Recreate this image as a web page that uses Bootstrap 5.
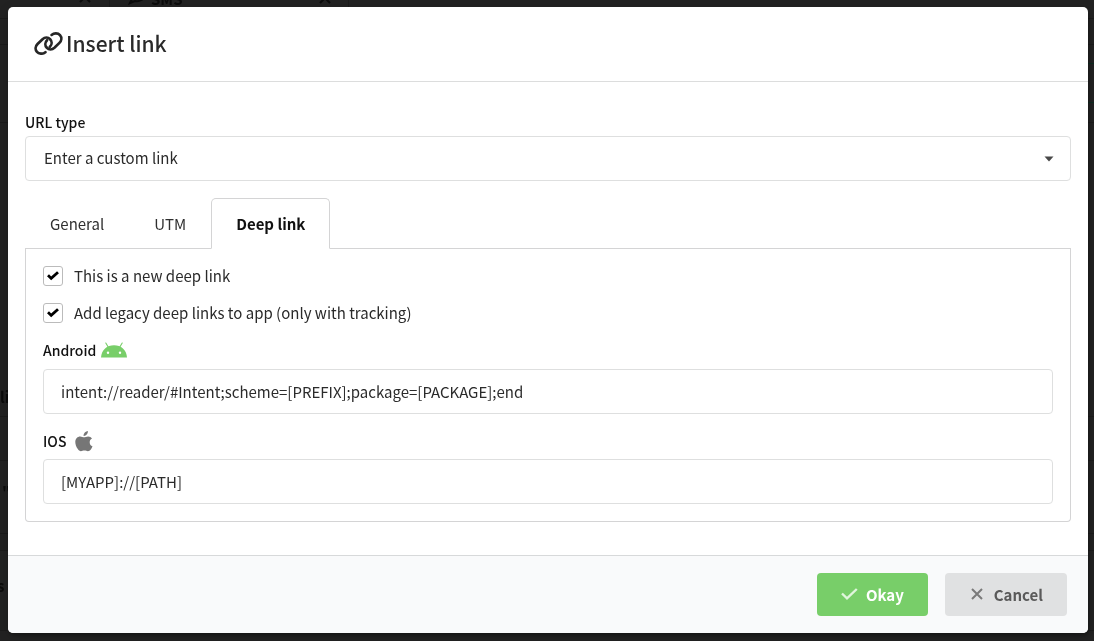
<!DOCTYPE html>
<html lang="en">
<head>
<meta charset="utf-8">
<meta name="viewport" content="width=device-width, initial-scale=1">
<title>Insert link</title>
<link href="https://cdn.jsdelivr.net/npm/bootstrap@5.3.0/dist/css/bootstrap.min.css" rel="stylesheet">
<style>
  body { background: #222; color: #2a2a2a; font: 400 15px/24px "Noto Sans CJK SC", "Open Sans", sans-serif; overflow: hidden; }
  .page-behind { color: #0b0b0b; font-weight: 700; }
  .page-behind > * { position: absolute; line-height: 24px; }
  .rule { height: 1px; background: #1b1b1b; left: 0; right: 0; }
  .rule-green { height: 1px; background: #0d2b20; left: 50%; right: 0; }
  .rule-upright { width: 1px; height: 18px; top: 0; background: #1b1b1b; }
  .shell { padding: 7px 6px 8px 8px; }
  .modal-content { background: #fff; color: #2a2a2a; border: 0; border-radius: 5px; box-shadow: 1px 3px 3px rgba(0,0,0,.2), 1px 3px 12px rgba(0,0,0,.2); }
  .modal-header { padding: 19px 25px 22px; height: 75px; border-bottom: 1px solid #dcdddd; justify-content: flex-start; gap: 3px; }
  .modal-title { font-size: 21px; font-weight: 500; line-height: 32px; }
  .modal-body { padding: 28px 17px 33px; }
  .modal-footer { padding: 17px 21px 17px 17px; gap: 17px; border-top: 1px solid #d7d9da; background: #f9fafb; border-radius: 0 0 5px 5px; }
  .modal-footer > * { margin: 0; }
  .form-label { font-size: 14px; font-weight: 500; line-height: 24px; margin-bottom: 2px; color: #111; }
  .tab-pane .form-label { margin-bottom: 7px; }
  .tab-pane .form-control + .form-label { margin-top: 15px; margin-bottom: 6px; }
  .form-control, .form-select { height: 45px; padding: 8px 17px 10px; font-size: 15px; line-height: 24px; color: #2b2b2b; border-color: #dedfdf; border-radius: 4px; }
  .form-control { padding-bottom: 9px; }
  .form-select { padding-left: 18px; background-image: url("data:image/svg+xml,%3csvg xmlns='http://www.w3.org/2000/svg' viewBox='0 0 10 6'%3e%3cpath fill='%23484848' d='M.5.5h9L5 5.5z'/%3e%3c/svg%3e"); background-size: 10px 6px; background-position: right 16px center; }
  .nav-tabs { margin-top: 17px; border-bottom: 1px solid #d4d4d5; }
  .nav-tabs .nav-link { padding: 13px 24px 12px; color: #2f2f2f; line-height: 24px; border-radius: 5px 5px 0 0; }
  .nav-tabs .nav-link.active { background: #fff; color: #111; font-weight: 700; border-color: #d4d4d5 #d4d4d5 #fff; }
  .tab-content { border: 1px solid #d4d4d5; border-top: 0; border-radius: 0 0 4px 4px; padding: 15px 17px 17px; }
  .form-check { min-height: 24px; padding-left: 31px; margin-bottom: 13px; }
  .form-check .form-check-input { width: 20px; height: 20px; margin: 2px 0 0 -31px; border-color: #bbb; border-radius: 3px; }
  .form-check-input:checked { background-color: #fff; background-size: 14px 14px; background-image: url("data:image/svg+xml,%3csvg xmlns='http://www.w3.org/2000/svg' viewBox='0 0 14 14'%3e%3cpath fill='none' stroke='%23000' stroke-width='2.8' d='M2 6.2l3.2 3.2L12 3.2'/%3e%3c/svg%3e"); }
  .btn { height: 43px; padding: 8px 24px 9px; font-size: 15px; font-weight: 700; line-height: 25px; border: 0; border-radius: 4px; }
  .btn-okay, .btn-okay:hover { background: #78ce69; color: #fff; }
  .btn-cancel, .btn-cancel:hover { background: #e0e1e2; color: #5a5a5a; }
</style>
</head>
<body>
<div class="page-behind position-fixed top-0 start-0 w-100 h-100 overflow-hidden" aria-hidden="true">
  <i class="rule" style="top:18px"></i><i class="rule" style="top:44px"></i>
  <i class="rule-green" style="top:63px"></i><i class="rule-green" style="top:102px"></i>
  <i class="rule" style="top:122px"></i><i class="rule" style="top:416px"></i>
  <i class="rule" style="top:460px"></i><i class="rule" style="top:533px"></i>
  <i class="rule" style="top:550px"></i><i class="rule" style="top:630px"></i>
  <i class="rule-upright" style="left:109px"></i><i class="rule-upright" style="left:348px"></i>
  <svg style="left:79px;top:-7px" width="12" height="10" viewBox="0 0 12 10"><path d="M1 9l5-5 5 5" fill="none" stroke="#0b0b0b" stroke-width="2"/></svg>
  <svg style="left:128px;top:-11px" width="17" height="16" viewBox="0 0 17 16"><path d="M2 14l2-4C0 5 4 1 9 1s7 3 7 6-4 6-9 5l-5 2z" fill="none" stroke="#0b0b0b" stroke-width="2"/></svg>
  <span style="left:151px;top:-13px">SMS</span>
  <svg style="left:319px;top:-6px" width="12" height="10" viewBox="0 0 12 10"><path d="M1 9l5-5 5 5" fill="none" stroke="#0b0b0b" stroke-width="2"/></svg>
  <span style="left:0;top:385px">li</span>
  <span style="left:2px;top:480px">"</span>
  <span style="left:-3px;top:574px">s</span>
</div>

<main class="shell position-relative">
  <form class="modal-content" onsubmit="return false">
    <header class="modal-header">
      <svg width="30" height="24" viewBox="-1 -1 31 25" fill="none" stroke="#262626" stroke-width="2.8" stroke-linecap="round" aria-hidden="true">
        <path d="M11.800 21.100C9.200 23.200 5.200 23.200 3 20.700 .8 18.200 1.400 14.800 3.600 12.600L8.800 7.600C11.200 5.400 14.600 5.400 16.700 7.600 18.900 9.900 18.700 13.200 16.500 15.400"/>
        <path d="M18.200 3.100C20.800 .8 24.800 .8 27 3.300 29.200 5.800 28.600 9.200 26.400 11.400L21.200 16.400C18.800 18.600 15.400 18.600 13.300 16.400 11.100 14.100 11.300 10.800 13.500 8.600"/>
      </svg>
      <h1 class="modal-title">Insert link</h1>
    </header>

    <div class="modal-body">
      <label class="form-label d-block" for="urlType">URL type</label>
      <select class="form-select" id="urlType"><option>Enter a custom link</option></select>

      <ul class="nav nav-tabs" role="tablist">
        <li class="nav-item"><button type="button" class="nav-link" role="tab">General</button></li>
        <li class="nav-item"><button type="button" class="nav-link" role="tab">UTM</button></li>
        <li class="nav-item"><button type="button" class="nav-link active" role="tab" aria-selected="true">Deep link</button></li>
      </ul>
      <div class="tab-content">
        <div class="tab-pane active" role="tabpanel">
          <div class="form-check">
            <input class="form-check-input" type="checkbox" id="newDeep" checked>
            <label class="form-check-label" for="newDeep">This is a new deep link</label>
          </div>
          <div class="form-check">
            <input class="form-check-input" type="checkbox" id="legacy" checked>
            <label class="form-check-label" for="legacy">Add legacy deep links to app (only with tracking)</label>
          </div>
          <label class="form-label d-flex align-items-center gap-1" for="android">Android
            <svg width="28" height="16" viewBox="0 0 28 16" aria-hidden="true">
              <path d="M1 15.500C1.500 7.500 7 3.200 14 3.200S26.500 7.500 27 15.500z" fill="#78ce69"/>
              <path d="M5.800 1l2.700 4.500M22.200 1l-2.700 4.500" stroke="#78ce69" stroke-width="1.100" stroke-linecap="round"/>
              <circle cx="8" cy="10.800" r="1.200" fill="#fff"/><circle cx="20" cy="10.800" r="1.200" fill="#fff"/>
            </svg>
          </label>
          <input class="form-control" type="text" id="android" value="intent://reader/#Intent;scheme=[PREFIX];package=[PACKAGE];end">
          <label class="form-label d-flex align-items-center gap-2" for="ios">IOS
            <svg width="20" height="22" viewBox="0 0 20 22" fill="#767676" aria-hidden="true">
              <path d="M13.900 1c.1 1.500-.4 2.700-1.200 3.600-.8.900-1.800 1.400-3.100 1.300-.1-1.300.5-2.500 1.200-3.300C11.600 1.700 12.900 1.100 13.900 1zM18 8.600c-1.500.9-2.300 2.100-2.300 3.800 0 1.900 1.100 3.200 2.800 3.900-.4 1.200-1 2.200-1.700 3.200-.9 1.300-1.800 1.700-2.900 1.700-1.300 0-1.900-.7-3.500-.7s-2.200.7-3.500.7c-1.200 0-2.200-.8-3.100-2.200C2.300 16.800 1.300 14.400 1.300 11.900c0-3.400 2.300-5.500 4.900-5.500 1.500 0 2.800.9 3.800.9s2.500-.9 4.200-.9c1.600 0 2.900.7 3.800 2.200z"/>
            </svg>
          </label>
          <input class="form-control" type="text" id="ios" value="[MYAPP]://[PATH]">
        </div>
      </div>
    </div>

    <footer class="modal-footer">
      <button type="submit" class="btn btn-okay d-flex align-items-center gap-2">
        <svg width="17" height="14" viewBox="0 0 17 14" aria-hidden="true"><path d="M1 6.500l5 4.800L15.800 2" fill="none" stroke="#e0f5dc" stroke-width="2.400"/></svg>
        Okay
      </button>
      <button type="button" class="btn btn-cancel d-flex align-items-center gap-2">
        <svg width="17" height="14" viewBox="0 0 17 14" aria-hidden="true"><path d="M3 2l10 10M13 2L3 12" fill="none" stroke="#7a7a7a" stroke-width="2"/></svg>
        Cancel
      </button>
    </footer>
  </form>
</main>
<script src="https://cdn.jsdelivr.net/npm/bootstrap@5.3.0/dist/js/bootstrap.bundle.min.js"></script>
</body>
</html>
